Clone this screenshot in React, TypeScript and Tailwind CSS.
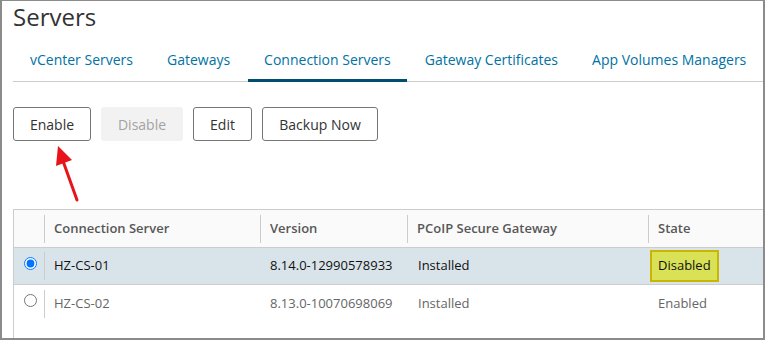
import React from 'react';

const tabs = ['vCenter Servers', 'Gateways', 'Connection Servers', 'Gateway Certificates', 'App Volumes Managers'];

const rows = [
  { name: 'HZ-CS-01', version: '8.14.0-12990578933', pcoip: 'Installed', state: 'Disabled', selected: true },
  { name: 'HZ-CS-02', version: '8.13.0-10070698069', pcoip: 'Installed', state: 'Enabled', selected: false },
];

const Divider: React.FC = () => <div className="h-[28px] w-px shrink-0 bg-[#cccccc]" />;

const App: React.FC = () => {
  return (
    <div
      className="relative h-[340px] w-[765px] overflow-hidden border-x-2 border-b-2 border-t border-[#8b8b8b] bg-white"
      style={{ fontFamily: '"Open Sans", "Liberation Sans", sans-serif' }}
    >
      {/* Title */}
      <h1 className="ml-[11px] h-[32px] text-[24px] leading-[32px] text-[#333333]">Servers</h1>

      {/* Tabs */}
      <div className="ml-[11px] mt-[17px] flex gap-[2px] border-b border-[#cccccc] pl-px">
        {tabs.map((t) => (
          <div
            key={t}
            className="relative h-[31px] px-4 text-[14px] leading-[20px] text-[#0072a3]"
          >
            {t}
            {t === 'Connection Servers' && (
              <span className="absolute bottom-[-1px] left-0 right-0 h-[3px] bg-[#004d6f]" />
            )}
          </div>
        ))}
      </div>

      {/* Action buttons */}
      <div className="ml-[11px] mt-[25px] flex gap-[10px] text-[14px]">
        <button className="h-[34px] w-[78px] rounded-[3px] border border-[#767676] text-[#333333]">Enable</button>
        <button className="h-[34px] w-[82px] rounded-[3px] bg-[#f2f2f2] text-[#a3a3a3]">Disable</button>
        <button className="h-[34px] w-[59px] rounded-[3px] border border-[#767676] text-[#333333]">Edit</button>
        <button className="h-[34px] w-[116px] rounded-[3px] border border-[#767676] text-[#333333]">Backup Now</button>
      </div>

      {/* Annotation arrow */}
      <svg className="absolute left-0 top-0" width="100" height="210" viewBox="0 0 100 210">
        <line x1="75" y1="199" x2="61" y2="160" stroke="#e8141c" strokeWidth="3" strokeLinecap="round" />
        <polygon points="56,145 54,165 70,159" fill="#e8141c" />
      </svg>

      {/* Table */}
      <div className="ml-[11px] mt-[68px] h-[200px] w-[800px] border-l border-t border-[#cccccc] text-[13px]">
        <div className="grid h-[38px] grid-cols-[30px_216px_147px_241px_1fr] border-b border-[#cccccc] bg-[#fafafa] font-semibold text-[#575757]">
          <div />
          {['Connection Server', 'Version', 'PCoIP Secure Gateway', 'State'].map((h) => (
            <div key={h} className="flex items-center">
              <Divider />
              <span className="pl-[9px]">{h}</span>
            </div>
          ))}
        </div>
        {rows.map((r) => (
          <div
            key={r.name}
            className={`grid h-[37px] grid-cols-[30px_216px_147px_241px_1fr] ${
              r.selected ? 'border-b border-[#cccccc] bg-[#d9e4ea] text-[#111111]' : 'text-[#666666]'
            }`}
          >
            <div className="flex items-center pl-[10px]">
              <input
                type="radio"
                checked={r.selected}
                readOnly
                className="m-0 mb-[6px] h-[13px] w-[13px]"
              />
            </div>
            <div className="flex items-center">
              <Divider />
              <span className="pl-[9px]">{r.name}</span>
            </div>
            <div className="flex items-center pl-[10px]">{r.version}</div>
            <div className="flex items-center pl-[11px]">{r.pcoip}</div>
            <div className="flex items-center pl-[10px]">
              {r.state === 'Disabled' ? (
                <span className="-ml-[8px] flex h-[32px] items-center border-2 border-[#cbb500] bg-[#d9e157] px-[6px] text-[#111111]">
                  {r.state}
                </span>
              ) : (
                <span>{r.state}</span>
              )}
            </div>
          </div>
        ))}
      </div>
    </div>
  );
};

export default App;
